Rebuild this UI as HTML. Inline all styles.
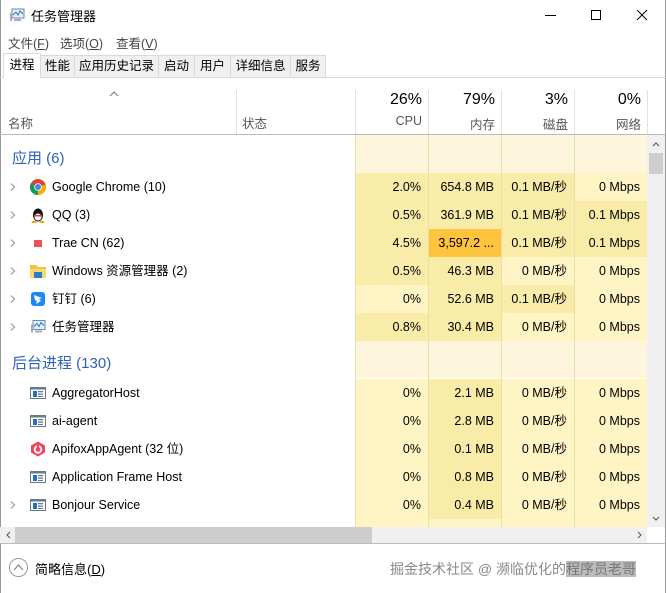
<!DOCTYPE html>
<html><head><meta charset="utf-8"><style>
*{margin:0;padding:0;box-sizing:border-box}
body{width:666px;height:593px;background:#fff;font-family:"Liberation Sans","Noto Sans CJK SC",sans-serif;font-size:12.5px;color:#000;position:relative;overflow:hidden}
.a{position:absolute;white-space:nowrap}
.tab{position:absolute;top:55px;height:22px;border:1px solid #d9d9d9;border-bottom:none;background:#f0f0f0;font-size:12.5px;line-height:20px;text-align:center}
.cell{position:absolute;height:28px;line-height:28px;text-align:right;padding-right:7px;font-size:12.5px}
.L{background:#fff4c4}.M{background:#f9eca8}.B{background:#ffc43d}.H{background:#fdf6dc}
.nm{position:absolute;left:52px;font-size:12.5px;line-height:28px;height:28px}
.ch{position:absolute;left:10px;width:6px;height:8px}
.ico{position:absolute;left:30px;width:16px;height:16px}
.grp{position:absolute;left:12px;color:#2e61b7;font-size:15px}
</style></head><body>
<div class="a" style="left:0;top:0;width:1px;height:593px;background:#999"></div>
<div class="a" style="right:0;top:0;width:1px;height:593px;background:#999"></div>
<svg class="a" style="left:9px;top:8px" width="16" height="15" viewBox="0 0 16 15"><rect x="3" y="1" width="12" height="9" fill="#e8f0f8" stroke="#6a8aa8"/><polyline points="4,7 7,4 9,7 11,3 14,6" fill="none" stroke="#2b73c8" stroke-width="1"/><rect x="1" y="5" width="2" height="8" fill="#aab"/><rect x="5" y="11" width="7" height="2" fill="#aab"/></svg>
<div class="a" style="left:31px;top:6px;font-size:13px">任务管理器</div>
<div class="a" style="left:545px;top:15px;width:11px;height:1px;background:#000"></div>
<div class="a" style="left:591px;top:10px;width:10px;height:10px;border:1px solid #000"></div>
<svg class="a" style="left:636px;top:9px" width="12" height="12"><path d="M1 1L11 11M11 1L1 11" stroke="#000" stroke-width="1"/></svg>
<div class="a" style="left:8px;top:33px;color:#444;font-size:12.5px">文件(<u>F</u>)</div>
<div class="a" style="left:60px;top:33px;color:#444;font-size:12.5px">选项(<u>O</u>)</div>
<div class="a" style="left:116px;top:33px;color:#444;font-size:12.5px">查看(<u>V</u>)</div>
<div class="a" style="left:0;top:77px;width:666px;height:1px;background:#d9d9d9"></div>
<div class="tab" style="left:40px;width:35px">性能</div>
<div class="tab" style="left:74px;width:85px">应用历史记录</div>
<div class="tab" style="left:158px;width:37px">启动</div>
<div class="tab" style="left:194px;width:37px">用户</div>
<div class="tab" style="left:230px;width:61px">详细信息</div>
<div class="tab" style="left:290px;width:36px">服务</div>
<div class="tab" style="left:3px;top:53px;width:38px;height:25px;background:#fff;line-height:22px">进程</div>
<svg class="a" style="left:109px;top:91px" width="10" height="6"><path d="M1 5L5 1L9 5" fill="none" stroke="#777"/></svg>
<div class="a" style="left:8px;top:113px;color:#555">名称</div>
<div class="a" style="left:242px;top:113px;color:#555">状态</div>
<div class="a" style="left:236px;top:90px;width:1px;height:44px;background:#e3e3e3"></div>
<div class="a" style="left:355px;top:90px;width:1px;height:44px;background:#e3e3e3"></div>
<div class="a" style="left:428px;top:90px;width:1px;height:44px;background:#e3e3e3"></div>
<div class="a" style="left:501px;top:90px;width:1px;height:44px;background:#e3e3e3"></div>
<div class="a" style="left:574px;top:90px;width:1px;height:44px;background:#e3e3e3"></div>
<div class="a" style="left:647px;top:90px;width:1px;height:44px;background:#e3e3e3"></div>
<div class="a" style="left:355px;top:91px;width:67px;text-align:right;font-size:16px">26%</div>
<div class="a" style="left:428px;top:91px;width:67px;text-align:right;font-size:16px">79%</div>
<div class="a" style="left:501px;top:91px;width:67px;text-align:right;font-size:16px">3%</div>
<div class="a" style="left:574px;top:91px;width:67px;text-align:right;font-size:16px">0%</div>
<div class="a" style="left:355px;top:114px;width:67px;text-align:right;color:#555">CPU</div>
<div class="a" style="left:428px;top:114px;width:67px;text-align:right;color:#555">内存</div>
<div class="a" style="left:501px;top:114px;width:67px;text-align:right;color:#555">磁盘</div>
<div class="a" style="left:574px;top:114px;width:67px;text-align:right;color:#555">网络</div>
<div class="a" style="left:0;top:134px;width:666px;height:1px;background:#bbb"></div>
<div class="a H" style="left:356px;top:135px;width:291px;height:38px"></div>
<div class="a H" style="left:356px;top:341px;width:291px;height:37px"></div>
<div class="a L" style="left:356px;top:518px;width:291px;height:9px"></div>
<div class="grp" style="top:147px">应用 (6)</div>
<div class="grp" style="top:352px">后台进程 (130)</div>
<div id="rows"></div>
<div class="a" style="left:355px;top:135px;width:1px;height:392px;background:#eadfa8"></div>
<div class="a" style="left:428px;top:135px;width:1px;height:392px;background:#eadfa8"></div>
<div class="a" style="left:501px;top:135px;width:1px;height:392px;background:#eadfa8"></div>
<div class="a" style="left:574px;top:135px;width:1px;height:392px;background:#eadfa8"></div>
<div class="a" style="left:647px;top:135px;width:18px;height:392px;background:#f0f0f0"></div>
<svg class="a" style="left:652px;top:142px" width="8" height="5"><path d="M1 4L4 1L7 4" fill="none" stroke="#555"/></svg>
<div class="a" style="left:649px;top:153px;width:14px;height:21px;background:#cdcdcd"></div>
<svg class="a" style="left:652px;top:516px" width="8" height="5"><path d="M1 1L4 4L7 1" fill="none" stroke="#555"/></svg>
<div class="a" style="left:0;top:527px;width:647px;height:16px;background:#f0f0f0"></div>
<div class="a" style="left:15px;top:527px;width:357px;height:16px;background:#cdcdcd"></div>
<svg class="a" style="left:6px;top:531px" width="5" height="8"><path d="M4 1L1 4L4 7" fill="none" stroke="#555"/></svg>
<svg class="a" style="left:637px;top:531px" width="5" height="8"><path d="M1 1L4 4L1 7" fill="none" stroke="#555"/></svg>
<div class="a" style="left:0;top:543px;width:666px;height:1px;background:#bbb"></div>
<div class="a" style="left:9px;top:558px;width:19px;height:19px;border:1px solid #999;border-radius:50%"></div>
<svg class="a" style="left:13px;top:563px" width="11" height="8"><path d="M1 7L5.5 2L10 7" fill="none" stroke="#777"/></svg>
<div class="a" style="left:35px;top:559px;font-size:13px">简略信息(<u>D</u>)</div>
<div class="a" style="left:390px;top:559px;font-size:14px;color:#888">掘金技术社区 @ 濒临优化的<span style="background:#bbb;color:#777">程序员老哥</span></div>
<script>
var R=[
[173,'Google Chrome (10)','chrome',1,['M','M','M','L'],['2.0%','654.8 MB','0.1 MB/秒','0 Mbps']],
[201,'QQ (3)','qq',1,['M','M','M','M'],['0.5%','361.9 MB','0.1 MB/秒','0.1 Mbps']],
[229,'Trae CN (62)','trae',1,['M','B','M','M'],['4.5%','3,597.2 ...','0.1 MB/秒','0.1 Mbps']],
[257,'Windows 资源管理器 (2)','folder',1,['M','M','L','L'],['0.5%','46.3 MB','0 MB/秒','0 Mbps']],
[285,'钉钉 (6)','ding',1,['L','M','M','L'],['0%','52.6 MB','0.1 MB/秒','0 Mbps']],
[313,'任务管理器','tm',1,['M','M','L','L'],['0.8%','30.4 MB','0 MB/秒','0 Mbps']],
[379,'AggregatorHost','svc',0,['L','M','L','L'],['0%','2.1 MB','0 MB/秒','0 Mbps']],
[407,'ai-agent','svc',0,['L','M','L','L'],['0%','2.8 MB','0 MB/秒','0 Mbps']],
[435,'ApifoxAppAgent (32 位)','apifox',0,['L','M','L','L'],['0%','0.1 MB','0 MB/秒','0 Mbps']],
[463,'Application Frame Host','svc',0,['L','M','L','L'],['0%','0.8 MB','0 MB/秒','0 Mbps']],
[491,'Bonjour Service','svc',1,['L','M','L','L'],['0%','0.4 MB','0 MB/秒','0 Mbps']]];
var I={
chrome:'<svg class="ico" viewBox="0 0 16 16"><circle cx="8" cy="8" r="8" fill="#db4437"/><path d="M8 8L1.1 12A8 8 0 0 0 8 16Z" fill="#0f9d58"/><path d="M8 8L1.1 12A8 8 0 0 1 1 4.2Z" fill="#0f9d58"/><path d="M8 8L8 16A8 8 0 0 0 15.5 5.5Z" fill="#f4b400"/><circle cx="8" cy="8" r="3.8" fill="#fff"/><circle cx="8" cy="8" r="3" fill="#4285f4"/></svg>',
qq:'<svg class="ico" viewBox="0 0 16 16"><ellipse cx="8" cy="8" rx="5" ry="6.5" fill="#111"/><ellipse cx="8" cy="10" rx="3.5" ry="3.5" fill="#fff"/><path d="M4 8h8v1.5H4z" fill="#e33"/><ellipse cx="4" cy="15" rx="2.5" ry="1" fill="#f90"/><ellipse cx="12" cy="15" rx="2.5" ry="1" fill="#f90"/></svg>',
trae:'<svg class="ico" viewBox="0 0 16 16"><rect x="4" y="5" width="8" height="7" fill="#f05151"/></svg>',
folder:'<svg class="ico" viewBox="0 0 16 16"><path d="M0 2h6l2 2h8v11H0z" fill="#f5c342"/><rect x="0" y="6" width="16" height="9" fill="#fbd870"/><rect x="4" y="9" width="8" height="6" fill="#2b7bc8"/></svg>',
ding:'<svg class="ico" viewBox="0 0 16 16"><rect x="1" y="1" width="14" height="14" rx="3" fill="#1e88f5"/><path d="M4 4l8 3-3 1 2 2-5 3 1-3-2-1z" fill="#fff"/></svg>',
tm:'<svg class="ico" viewBox="0 0 16 15"><rect x="3" y="1" width="12" height="9" fill="#e8f0f8" stroke="#6a8aa8"/><polyline points="4,7 7,4 9,7 11,3 14,6" fill="none" stroke="#2b73c8"/><rect x="1" y="5" width="2" height="8" fill="#aab"/><rect x="5" y="11" width="7" height="2" fill="#aab"/></svg>',
svc:'<svg class="ico" viewBox="0 0 16 16"><rect x="0.5" y="2.5" width="15" height="11" fill="#fff" stroke="#6a7888"/><rect x="0.5" y="2.5" width="15" height="2" fill="#6a7888"/><rect x="3" y="6" width="4" height="6" fill="#1e6fd0"/><rect x="8" y="6" width="5" height="1.3" fill="#6a7888"/><rect x="8" y="8.5" width="5" height="1.3" fill="#6a7888"/><rect x="8" y="11" width="5" height="1" fill="#6a7888"/></svg>',
apifox:'<svg class="ico" viewBox="0 0 16 16"><path d="M8 0.5L15 4.5V11.5L8 15.5L1 11.5V4.5Z" fill="#f0455a"/><circle cx="8" cy="8.5" r="3.3" fill="none" stroke="#fff" stroke-width="1.8"/><path d="M8 4v4" stroke="#f0455a" stroke-width="2"/></svg>'};
var X=[356,429,502,575],W=[72,72,72,72],h='';
R.forEach(function(r){var t=r[0];
if(r[3])h+='<svg class="ch" style="top:'+(t+10)+'px" viewBox="0 0 6 8"><path d="M1 0.5L4.5 4L1 7.5" fill="none" stroke="#999" stroke-width="1.2"/></svg>';
h+=I[r[2]].replace('class="ico"','class="ico" style="top:'+(t+6)+'px"');
h+='<div class="nm" style="top:'+t+'px">'+r[1]+'</div>';
for(var i=0;i<4;i++)h+='<div class="cell '+r[4][i]+'" style="left:'+X[i]+'px;top:'+t+'px;width:'+W[i]+'px">'+r[5][i]+'</div>';});
document.getElementById('rows').innerHTML=h;
</script>
</body></html>
